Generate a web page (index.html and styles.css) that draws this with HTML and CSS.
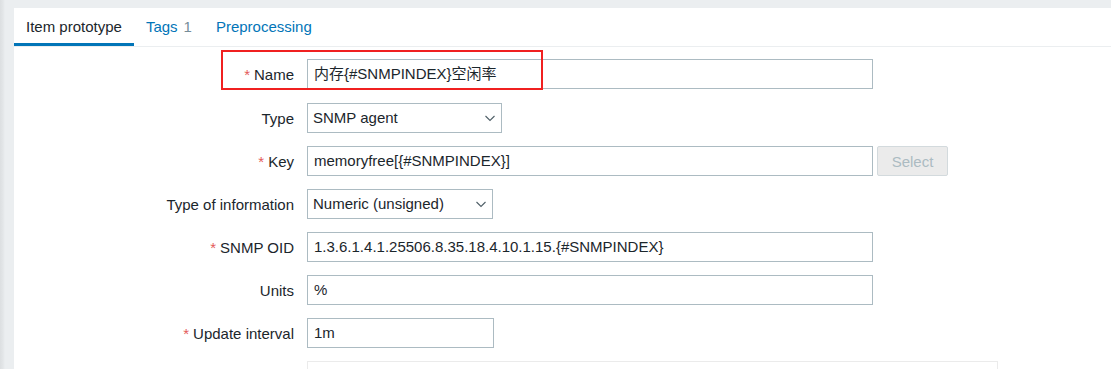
FILE: index.html
```html
<!DOCTYPE html>
<html>
<head>
<meta charset="utf-8">
<link rel="stylesheet" href="styles.css">
</head>
<body>
<div class="page">
  <div class="edge"></div>
  <div class="panel">
    <div class="tabs">
      <a class="tab active">Item prototype</a>
      <a class="tab">Tags<span class="count">1</span></a>
      <a class="tab">Preprocessing</a>
    </div>
    <div class="form">
      <div class="row row-first">
        <label class="label"><span class="req">*</span>Name</label>
        <div class="field">
          <div class="input w-full">内存{#SNMPINDEX}空闲率</div>
        </div>
        <div class="highlight"></div>
      </div>
      <div class="row">
        <label class="label">Type</label>
        <div class="field">
          <div class="input select w-type">SNMP agent<svg class="chev" width="12" height="7" viewBox="0 0 12 7"><path d="M1.5 1 L6 5.5 L10.5 1" fill="none" stroke="#4f5f67" stroke-width="1.1"/></svg></div>
        </div>
      </div>
      <div class="row">
        <label class="label"><span class="req">*</span>Key</label>
        <div class="field">
          <div class="input w-full">memoryfree[{#SNMPINDEX}]</div>
          <button class="btn-select">Select</button>
        </div>
      </div>
      <div class="row">
        <label class="label">Type of information</label>
        <div class="field">
          <div class="input select w-info">Numeric (unsigned)<svg class="chev" width="12" height="7" viewBox="0 0 12 7"><path d="M1.5 1 L6 5.5 L10.5 1" fill="none" stroke="#4f5f67" stroke-width="1.1"/></svg></div>
        </div>
      </div>
      <div class="row">
        <label class="label"><span class="req">*</span>SNMP OID</label>
        <div class="field">
          <div class="input w-full">1.3.6.1.4.1.25506.8.35.18.4.10.1.15.{#SNMPINDEX}</div>
        </div>
      </div>
      <div class="row">
        <label class="label">Units</label>
        <div class="field">
          <div class="input w-full">%</div>
        </div>
      </div>
      <div class="row">
        <label class="label"><span class="req">*</span>Update interval</label>
        <div class="field">
          <div class="input w-interval">1m</div>
        </div>
      </div>
      <div class="row">
        <label class="label"></label>
        <div class="field">
          <div class="table-box"></div>
        </div>
      </div>
    </div>
  </div>
</div>
</body>
</html>
```
FILE: styles.css
```css
* { box-sizing: border-box; }
html, body {
  margin: 0;
  padding: 0;
  background: #ebeef0;
  height: 100%;
  overflow: hidden;
}
body {
  font-family: "Liberation Sans", Arial, "Noto Sans CJK SC", sans-serif;
  font-size: 15px;
  color: #1b262c;
}
.page {
  display: flex;
  padding-top: 8px;
  height: 100%;
}
.edge {
  width: 14px;
  flex: none;
  background: linear-gradient(to right, #dcdfe1 0, #e3e6e8 3px, #ebeef0 5px);
  margin-top: -8px;
}
.panel {
  flex: 1;
  background: #ffffff;
}
.tabs {
  display: flex;
  border-bottom: 1px solid #ebeef0;
  height: 39px;
}
.tab {
  display: block;
  padding: 11px 12px 8px;
  line-height: 16px;
  height: 38px;
  color: #0275b8;
  border-bottom: 3px solid transparent;
  white-space: nowrap;
}
.tab.active {
  color: #1b262c;
  border-bottom-color: #0275b8;
}
.count {
  color: #768d99;
  margin-left: 6px;
}
.form {
  padding-top: 12px;
  display: flex;
  flex-direction: column;
  gap: 13px;
}
.row {
  display: flex;
  align-items: center;
  gap: 13px;
  position: relative;
}
.row-first {
  margin-bottom: 1px;
}
.label {
  width: 280px;
  flex: none;
  text-align: right;
  white-space: nowrap;
}
.req {
  color: #e45959;
  margin-right: 4px;
}
.field {
  display: flex;
  align-items: center;
  gap: 4px;
}
.input {
  height: 30px;
  border: 1px solid #acbbc2;
  background: #fff;
  padding: 0 6px;
  line-height: 28px;
  white-space: nowrap;
  overflow: hidden;
}
.w-full { width: 566px; }
.w-type { width: 195px; }
.w-info { width: 186px; }
.w-interval { width: 187px; }
.select {
  display: flex;
  align-items: center;
  justify-content: space-between;
  padding: 0 5px 0 5px;
}
.chev {
  flex: none;
}
.btn-select {
  width: 71px;
  height: 30px;
  border: 1px solid #d3dadd;
  border-radius: 2px;
  background: #ebebeb;
  color: #acbbc2;
  font-family: inherit;
  font-size: 15px;
  padding: 0;
}
.table-box {
  width: 691px;
  height: 30px;
  border: 1px solid #ebebeb;
  background: #fff;
}
.highlight {
  position: absolute;
  left: 207px;
  top: -9px;
  width: 322px;
  height: 40px;
  border: 2px solid #f02020;
}
```
